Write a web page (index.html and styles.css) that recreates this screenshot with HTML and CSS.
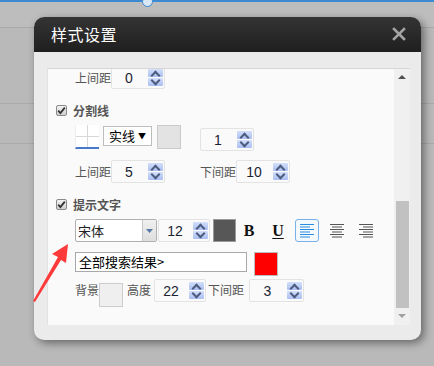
FILE: index.html
```html
<!DOCTYPE html>
<html lang="zh">
<head>
<meta charset="utf-8">
<title>样式设置</title>
<link rel="stylesheet" href="styles.css">
</head>
<body>
<div class="page">
  <div class="topbar"><span class="knob"></span></div>
  <div class="bgrow r1"></div>
  <div class="bgrow r2"></div>
  <div class="bgrow r3"></div>

  <div class="dialog">
    <div class="dlg-head">
      <span class="dlg-title">样式设置</span>
      <svg class="close" width="14" height="14" viewBox="0 0 14 14"><path d="M2 2 L12 12 M12 2 L2 12" stroke="#a3a3a3" stroke-width="2.6" stroke-linecap="square"/></svg>
    </div>
    <div class="dlg-body">
      <div class="panel">
        <div class="content">
          <div class="row row1 indent">
            <span class="lbl">上间距</span>
            <div class="spin w54"><span class="val">0</span><span class="btns"><i class="up"></i><i class="dn"></i></span></div>
          </div>

          <div class="row chk-row">
            <span class="chk"><svg width="9" height="9" viewBox="0 0 9 9"><path d="M1.2 4.6 L3.4 7 L7.8 1.6" fill="none" stroke="#333" stroke-width="1.8"/></svg></span>
            <span class="chk-lbl">分割线</span>
          </div>

          <div class="row line-row indent">
            <div class="line-prev"></div>
            <div class="linesel">实线<span class="tri">▼</span></div>
            <div class="swatch-gray"></div>
            <div class="spin w54 lineval"><span class="val">1</span><span class="btns"><i class="up"></i><i class="dn"></i></span></div>
          </div>

          <div class="row gap-row indent">
            <span class="lbl">上间距</span>
            <div class="spin w54"><span class="val">5</span><span class="btns"><i class="up"></i><i class="dn"></i></span></div>
            <span class="lbl lbl-down">下间距</span>
            <div class="spin w54"><span class="val">10</span><span class="btns"><i class="up"></i><i class="dn"></i></span></div>
          </div>

          <div class="row chk-row chk2">
            <span class="chk"><svg width="9" height="9" viewBox="0 0 9 9"><path d="M1.2 4.6 L3.4 7 L7.8 1.6" fill="none" stroke="#333" stroke-width="1.8"/></svg></span>
            <span class="chk-lbl">提示文字</span>
          </div>

          <div class="row font-row indent">
            <div class="fontsel"><span class="fs-text">宋体</span><span class="fs-btn"><svg width="7" height="4" viewBox="0 0 7 4"><path d="M0 0 H7 L3.5 4Z" fill="#5a7aa8"/></svg></span></div>
            <div class="spin w52 fsize"><span class="val">12</span><span class="btns"><i class="up"></i><i class="dn"></i></span></div>
            <div class="swatch-dark"></div>
            <span class="tb bold">B</span>
            <span class="tb under">U</span>
            <span class="align active">
              <svg width="16" height="15" viewBox="0 0 16 15"><g stroke="#2a8be0" stroke-width="1.2"><path d="M1 1.5H15M1 4H11M1 6.5H15M1 9H11M1 11.5H15M1 14H11"/></g></svg>
            </span>
            <span class="align">
              <svg width="16" height="15" viewBox="0 0 16 15"><g stroke="#555" stroke-width="1.2"><path d="M1 1.5H15M3 4H13M1 6.5H15M3 9H13M1 11.5H15M3 14H13"/></g></svg>
            </span>
            <span class="align">
              <svg width="16" height="15" viewBox="0 0 16 15"><g stroke="#555" stroke-width="1.2"><path d="M1 1.5H15M5 4H15M1 6.5H15M5 9H15M1 11.5H15M5 14H15"/></g></svg>
            </span>
          </div>

          <div class="row text-row indent">
            <div class="textin">全部搜索结果&gt;</div>
            <div class="swatch-red"></div>
          </div>

          <div class="row bottom-row indent">
            <span class="lbl lbl2">背景</span>
            <div class="swatch-bg"></div>
            <span class="lbl lbl2 lbl-h">高度</span>
            <div class="spin w52 hval"><span class="val">22</span><span class="btns"><i class="up"></i><i class="dn"></i></span></div>
            <span class="lbl lbl-d2">下间距</span>
            <div class="spin w55 dval"><span class="val">3</span><span class="btns"><i class="up"></i><i class="dn"></i></span></div>
          </div>
        </div>
        <div class="scrollbar">
          <span class="sb-up"></span>
          <span class="sb-thumb"></span>
          <span class="sb-dn"></span>
        </div>
      </div>
    </div>
  </div>

  <svg class="arrow" width="44" height="66" viewBox="0 0 44 66">
    <path d="M35 1 L19 11 L25 14 L0 58 L2 59 L28 17 L33 20 Z" fill="#ff3a3a"/>
  </svg>
</div>
</body>
</html>
```

FILE: styles.css
```css
* { box-sizing: border-box; }
html, body { margin: 0; padding: 0; }
body {
  width: 434px;
  height: 366px;
  overflow: hidden;
  background: #bababa;
  font-family: "Noto Sans CJK SC", "Noto Sans", sans-serif;
}
.page {
  position: relative;
  width: 434px;
  height: 366px;
  background: #b9b9b9;
}
.topbar {
  height: 27px;
  background: #bdbdbd;
  border-top: 2px solid #3d8ad4;
  position: relative;
}
.knob {
  position: absolute;
  left: 142px;
  top: -6px;
  width: 11px;
  height: 11px;
  border-radius: 50%;
  border: 1px solid #3d8ad4;
  background: #d9e6f3;
}
.bgrow { border-top: 1px solid #a9a9a9; }
.r1 { height: 76px; }
.r2 { height: 40px; }
.r3 { height: 1px; }

.dialog {
  position: absolute;
  left: 34px;
  top: 17px;
  width: 387px;
  height: 323px;
  border-radius: 10px;
  background: #ebebeb;
  box-shadow: 3px 3px 9px rgba(0,0,0,0.45);
  overflow: hidden;
  display: flex;
  flex-direction: column;
}
.dlg-head {
  height: 35px;
  flex: none;
  background: linear-gradient(#343434, #1f1f1f);
  display: flex;
  align-items: center;
  justify-content: space-between;
  padding: 0 15px 0 17px;
}
.dlg-title {
  color: #fff;
  font-size: 16px;
  letter-spacing: 0.5px;
  line-height: 20px;
  margin-top: -2px;
}
.close { margin-top: -1px; }

.dlg-body {
  flex: 1;
  padding: 16px 11px 15px 13px;
}
.panel {
  height: 257px;
  background: #fafafa;
  border-top: 1px solid #d6d6d6;
  border-left: 1px solid #e2e2e2;
  display: flex;
  overflow: hidden;
}
.content {
  flex: 1;
  position: relative;
  margin-top: -3px;
  font-size: 12px;
  color: #555;
}
.row { display: flex; align-items: center; }
.indent { padding-left: 27px; }

.lbl {
  width: 36px;
  font-size: 12px;
  line-height: 16px;
  color: #555;
  white-space: nowrap;
}
.lbl2 { width: 24px; }

.row1 { height: 23px; }

/* spinner input */
.spin {
  position: relative;
  height: 23px;
  border: 1px solid #e3e3e3;
  border-radius: 2px;
  background: #fafafa;
  display: flex;
  align-items: center;
}
.w54 { width: 54px; }
.w52 { width: 52px; }
.w55 { width: 55px; }
.val {
  flex: 1;
  text-align: center;
  font-family: "Liberation Sans", Arial, sans-serif;
  font-size: 14px;
  color: #1c2433;
  padding-right: 2px;
}
.btns {
  width: 15px;
  height: 17px;
  margin-right: 1px;
  display: flex;
  flex-direction: column;
  gap: 1px;
}
.btns i {
  flex: 1;
  display: block;
  background: linear-gradient(#d3dffb, #a9bef0);
  border-radius: 1px;
  position: relative;
}
.btns i::after {
  content: "";
  position: absolute;
  left: 4px;
  width: 5px;
  height: 5px;
  border-left: 2px solid #4d5b7e;
  border-top: 2px solid #4d5b7e;
}
.btns .up::after { top: 3px; transform: rotate(45deg); }
.btns .dn::after { top: -1px; transform: rotate(225deg); }

/* checkbox rows */
.chk-row {
  height: 19px;
  margin-top: 12px;
  padding-left: 8px;
}
.chk {
  width: 11px;
  height: 11px;
  border: 1px solid #8a8a8a;
  border-radius: 2px;
  background: linear-gradient(#f2f2f2, #cfcfcf);
  display: flex;
  align-items: center;
  justify-content: center;
}
.chk-lbl {
  margin-left: 6px;
  font-size: 12px;
  font-weight: 700;
  color: #555;
  line-height: 16px;
}

/* line style row */
.line-row {
  margin-top: 5px;
  height: 25px;
  align-items: flex-start;
}
.line-prev {
  width: 24px;
  height: 24px;
  background:
    linear-gradient(90deg, transparent 11px, #d8d8d8 11px, #d8d8d8 12px, transparent 12px),
    linear-gradient(transparent 11px, #d8d8d8 11px, #d8d8d8 12px, transparent 12px),
    #fff;
  border-left: 1px solid #eee;
  border-bottom: 2px solid #4a78c8;
}
.linesel {
  margin-left: 4px;
  margin-top: 1px;
  width: 49px;
  height: 20px;
  border: 1px solid #bdbdbd;
  background: #fff;
  font-size: 13px;
  color: #000;
  line-height: 18px;
  padding-left: 5px;
  white-space: nowrap;
}
.tri { font-size: 8px; margin-left: 3px; vertical-align: 2px; }
.swatch-gray {
  margin-left: 5px;
  width: 24px;
  height: 24px;
  background: #e3e3e3;
  border: 1px solid #cacaca;
}
.lineval { margin-left: 19px; margin-top: 3px; }

.gap-row { margin-top: 10px; height: 23px; }
.lbl-down { margin-left: 35px; }

.chk2 { margin-top: 12px; }

/* font row */
.font-row { margin-top: 5px; height: 23px; }
.fontsel {
  width: 82px;
  height: 23px;
  border: 1px solid #b0b0b0;
  border-radius: 2px;
  background: #fff;
  display: flex;
}
.fs-text {
  flex: 1;
  font-size: 13px;
  line-height: 21px;
  color: #222;
  padding-left: 2px;
}
.fs-btn {
  width: 14px;
  background: linear-gradient(#f0f0f0, #dedede);
  border-left: 1px solid #c8c8c8;
  display: flex;
  align-items: center;
  justify-content: center;
}
.fsize { margin-left: 1px; }
.swatch-dark {
  margin-left: 3px;
  width: 23px;
  height: 23px;
  background: #575757;
  border: 1px solid #9a9a9a;
}
.tb {
  font-family: "Liberation Serif", "Times New Roman", serif;
  font-weight: 700;
  font-size: 16px;
  color: #111;
  width: 18px;
  text-align: center;
}
.bold { margin-left: 4px; }
.under { margin-left: 11px; text-decoration: underline; text-underline-offset: 2px; }
.align {
  width: 24px;
  height: 23px;
  display: flex;
  align-items: center;
  justify-content: center;
  margin-left: 5px;
  border: 1px solid transparent;
  border-radius: 3px;
}
.align.active {
  margin-left: 8px;
  border-color: #78b0e8;
  background: #f4f9fe;
}
.align + .align { margin-left: 6px; }
.align:last-child { margin-left: 5px; }

/* text row */
.text-row { margin-top: 10px; height: 24px; align-items: flex-start; }
.textin {
  width: 172px;
  height: 20px;
  border: 1px solid #a8a8a8;
  background: #fff;
  font-size: 13px;
  line-height: 18px;
  color: #000;
  padding-left: 3px;
  white-space: nowrap;
}
.swatch-red {
  margin-left: 7px;
  width: 24px;
  height: 24px;
  background: #ff0000;
  border: 1px solid #bdbdbd;
}

/* bottom row */
.bottom-row { margin-top: 3px; height: 28px; align-items: flex-start; }
.bottom-row .lbl { margin-top: 3px; }
.swatch-bg {
  width: 24px;
  height: 24px;
  margin-top: 4px;
  background: #efefef;
  border: 1px solid #cdcdcd;
}
.lbl-h { margin-left: 4px; }
.hval { margin-left: 3px; }
.lbl-d2 { margin-left: 2px; }
.dval { margin-left: 5px; }

/* scrollbar */
.scrollbar {
  width: 16px;
  flex: none;
  background: #f0f0f0;
  position: relative;
}
.sb-up {
  position: absolute;
  left: 4px;
  top: 6px;
  border-left: 4px solid transparent;
  border-right: 4px solid transparent;
  border-bottom: 4px solid #505050;
}
.sb-thumb {
  position: absolute;
  left: 2px;
  top: 132px;
  width: 13px;
  height: 107px;
  background: #c1c1c1;
}
.sb-dn {
  position: absolute;
  left: 4px;
  top: 245px;
  border-left: 4px solid transparent;
  border-right: 4px solid transparent;
  border-top: 4px solid #a0a0a0;
}

.arrow {
  position: absolute;
  left: 33px;
  top: 243px;
}
```
